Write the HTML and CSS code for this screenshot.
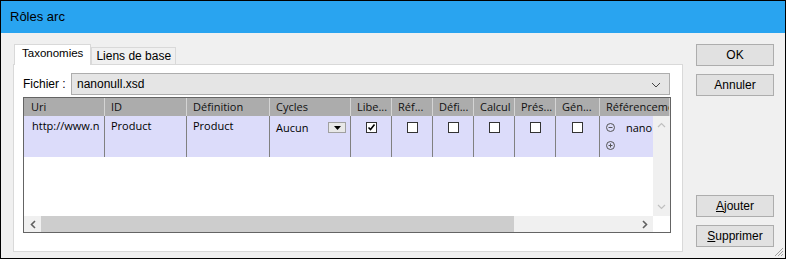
FILE: index.html
```html
<!DOCTYPE html>
<html lang="fr">
<head>
    <meta charset="UTF-8">
    <title>Rôles arc</title>
    <link rel="stylesheet" href="styles.css">
</head>
<body>
    <div class="window">
        <div class="titlebar">Rôles arc</div>

        <div class="dialog">
            <div class="main">
                <!-- Onglets -->
                <div class="tabs">
                    <div class="tab active">Taxonomies</div>
                    <div class="tab">Liens de base</div>
                </div>

                <div class="panel">
                    <div class="file-row">
                        <span class="file-label">Fichier :</span>
                        <div class="combo">
                            <span>nanonull.xsd</span>
                            <svg class="chevron" width="10" height="6" viewBox="0 0 10 6"><path d="M1 1 L5 5 L9 1" fill="none" stroke="#444" stroke-width="1"/></svg>
                        </div>
                    </div>

                    <!-- Grille -->
                    <div class="grid">
                        <div class="grid-head">
                            <div class="cell c-uri">Uri</div>
                            <div class="cell c-id">ID</div>
                            <div class="cell c-def">Définition</div>
                            <div class="cell c-cyc">Cycles</div>
                            <div class="cell c-sm">Libe...</div>
                            <div class="cell c-sm">Réf...</div>
                            <div class="cell c-sm">Défi...</div>
                            <div class="cell c-sm">Calcul</div>
                            <div class="cell c-sm">Prés...</div>
                            <div class="cell c-gen">Gén...</div>
                            <div class="cell c-ref">Référenceme</div>
                        </div>
                        <div class="grid-mid">
                            <div class="rows">
                                <div class="row">
                                    <div class="cell c-uri">http://www.n</div>
                                    <div class="cell c-id">Product</div>
                                    <div class="cell c-def">Product</div>
                                    <div class="cell c-cyc">
                                        <span class="cyc-text">Aucun</span>
                                        <span class="cyc-btn"><svg width="7" height="4" viewBox="0 0 7 4"><path d="M0 0 H7 L3.5 4 Z" fill="#000"/></svg></span>
                                    </div>
                                    <div class="cell c-sm"><span class="check"><svg width="9" height="9" viewBox="0 0 9 9"><path d="M1.5 4.5 L3.5 6.5 L7.5 1.5" fill="none" stroke="#000" stroke-width="1.6"/></svg></span></div>
                                    <div class="cell c-sm"><span class="check"></span></div>
                                    <div class="cell c-sm"><span class="check"></span></div>
                                    <div class="cell c-sm"><span class="check"></span></div>
                                    <div class="cell c-sm"><span class="check"></span></div>
                                    <div class="cell c-gen"><span class="check"></span></div>
                                    <div class="cell c-ref">
                                        <div class="ref-line">
                                            <svg width="9" height="9" viewBox="0 0 9 9"><circle cx="4.5" cy="4.5" r="4" fill="none" stroke="#555"/><path d="M2.5 4.5 H6.5" stroke="#555"/></svg>
                                            <span>nano</span>
                                        </div>
                                        <div class="ref-line">
                                            <svg width="9" height="9" viewBox="0 0 9 9"><circle cx="4.5" cy="4.5" r="4" fill="none" stroke="#555"/><path d="M2.5 4.5 H6.5 M4.5 2.5 V6.5" stroke="#555"/></svg>
                                        </div>
                                    </div>
                                </div>
                            </div>
                            <div class="vscroll">
                                <svg width="9" height="6" viewBox="0 0 9 6"><path d="M1 5 L4.5 1.5 L8 5" fill="none" stroke="#c0c0c0" stroke-width="1.2"/></svg>
                                <svg width="9" height="6" viewBox="0 0 9 6"><path d="M1 1 L4.5 4.5 L8 1" fill="none" stroke="#c0c0c0" stroke-width="1.2"/></svg>
                            </div>
                        </div>
                        <div class="hscroll">
                            <span class="arrow"><svg width="6" height="9" viewBox="0 0 6 9"><path d="M5 1 L1.5 4.5 L5 8" fill="none" stroke="#606060" stroke-width="1.6"/></svg></span>
                            <div class="track"><div class="thumb"></div></div>
                            <span class="arrow"><svg width="6" height="9" viewBox="0 0 6 9"><path d="M1 1 L4.5 4.5 L1 8" fill="none" stroke="#606060" stroke-width="1.6"/></svg></span>
                            <span class="corner"></span>
                        </div>
                    </div>
                </div>
            </div>

            <!-- Boutons -->
            <div class="buttons">
                <div class="btn-group">
                    <button>OK</button>
                    <button>Annuler</button>
                </div>
                <div class="btn-group">
                    <button><u>A</u>jouter</button>
                    <button><u>S</u>upprimer</button>
                </div>
            </div>
            <svg class="grip" width="11" height="11" viewBox="0 0 11 11"><path d="M10 2 L2 10 M10 5 L5 10 M10 8 L8 10" stroke="#a0a0a0" stroke-width="1"/></svg>
        </div>
    </div>
</body>
</html>
```

FILE: styles.css
```css
/* Fenêtre */
body {
    margin: 0;
    background: #fff;
    font-family: 'Liberation Sans', Arial, sans-serif;
    font-size: 12px;
    color: #000;
}

.window {
    width: 784px;
    height: 257px;
    border: 1px solid #000;
    background: #f0f0f0;
    display: flex;
    flex-direction: column;
}

.titlebar {
    height: 32px;
    background: #29a4f0;
    padding-left: 9px;
    line-height: 32px;
    font-size: 13px;
    flex-shrink: 0;
}

.dialog {
    flex: 1;
    display: flex;
    padding: 10px 11px 0 12px;
    position: relative;
}

.main {
    width: 671px;
    display: flex;
    flex-direction: column;
}

/* Onglets */
.tabs {
    display: flex;
    align-items: flex-end;
    height: 21px;
    padding-left: 1px;
}

.tab {
    height: 16px;
    line-height: 16px;
    padding: 0 4px;
    border: 1px solid #d9d9d9;
    border-bottom: none;
    background: #f0f0f0;
    font-size: 12px;
}

.tab.active {
    height: 20px;
    line-height: 17px;
    background: #fff;
    padding: 0 7px;
    position: relative;
    z-index: 1;
    margin-bottom: -1px;
    font-size: 11.5px;
}

.panel {
    height: 178px;
    border: 1px solid #d9d9d9;
    background: #fff;
    padding: 8px 0 0 9px;
}

.file-row {
    display: flex;
    align-items: center;
    height: 22px;
}

.file-label {
    width: 48px;
}

.combo {
    width: 584px;
    height: 20px;
    border: 1px solid #adadad;
    background: #e5e5e5;
    display: flex;
    align-items: center;
    justify-content: space-between;
    padding: 0 8px 0 5px;
}

.chevron {
    margin-top: 1px;
}

/* Grille */
.grid {
    margin-top: 2px;
    width: 646px;
    height: 134px;
    border: 1px solid #646464;
    overflow: hidden;
    font-family: 'Open Sans', sans-serif;
    font-size: 11px;
    background: #fff;
}

.grid-head {
    display: flex;
    height: 18px;
    background: #acacac;
    white-space: nowrap;
}

.grid-head .cell {
    line-height: 17px;
    border-right: 1px solid #d4d4d4;
    padding-left: 6px;
    color: #111;
}

.cell {
    flex-shrink: 0;
    box-sizing: border-box;
    overflow: hidden;
    white-space: nowrap;
}

.c-uri { width: 81px; }
.c-id { width: 82px; }
.c-def { width: 83px; }
.c-cyc { width: 81px; }
.c-sm { width: 41px; }
.c-gen { width: 44px; }
.c-ref { width: 70px; }

.grid-head .c-uri { padding-left: 7px; }

.grid-mid {
    display: flex;
    height: 100px;
}

.rows {
    width: 629px;
    overflow: hidden;
}

.row {
    display: flex;
    height: 41px;
    background: #dcdcfa;
}

.row .cell {
    border-right: 1px solid #808080;
    padding: 2px 0 0 6px;
    color: #000;
}

.row .c-uri { padding-left: 8px; }

.row .c-cyc {
    display: flex;
    align-items: flex-start;
    padding-top: 4px;
}

.cyc-text {
    width: 52px;
}

.cyc-btn {
    width: 16px;
    height: 9px;
    margin-top: 2px;
    background: #e8e8e8;
    border: 1px solid #a0a0a0;
    display: flex;
    align-items: center;
    justify-content: center;
}

.row .c-sm,
.row .c-gen {
    display: flex;
    justify-content: center;
    padding: 6px 0 0 0;
}

.check {
    width: 11px;
    height: 11px;
    border: 1px solid #333;
    background: #fff;
    box-sizing: border-box;
    display: flex;
    align-items: center;
    justify-content: center;
}

.row .c-ref {
    border-right: none;
    padding-left: 6px;
}

.ref-line {
    display: flex;
    align-items: center;
    gap: 11px;
    height: 18px;
}

.vscroll {
    width: 17px;
    background: #f0f0f0;
    display: flex;
    flex-direction: column;
    justify-content: space-between;
    align-items: center;
    padding: 6px 0 6px;
    box-sizing: border-box;
}

.hscroll {
    display: flex;
    height: 16px;
    background: #f0f0f0;
}

.arrow {
    width: 17px;
    display: flex;
    align-items: center;
    justify-content: center;
}

.track {
    width: 595px;
    display: flex;
}

.thumb {
    width: 473px;
    background: #cdcdcd;
}

.corner {
    width: 17px;
    background: #fff;
}

/* Boutons */
.buttons {
    margin-left: 13px;
    width: 78px;
    display: flex;
    flex-direction: column;
    justify-content: space-between;
    padding: 1px 0 11px;
}

.btn-group {
    display: flex;
    flex-direction: column;
    gap: 8px;
}

button {
    width: 78px;
    height: 22px;
    background: #e1e1e1;
    border: 1px solid #adadad;
    font-family: 'Liberation Sans', Arial, sans-serif;
    font-size: 12px;
    color: #000;
    padding: 0;
}

.grip {
    position: absolute;
    right: 1px;
    bottom: 1px;
}
```
